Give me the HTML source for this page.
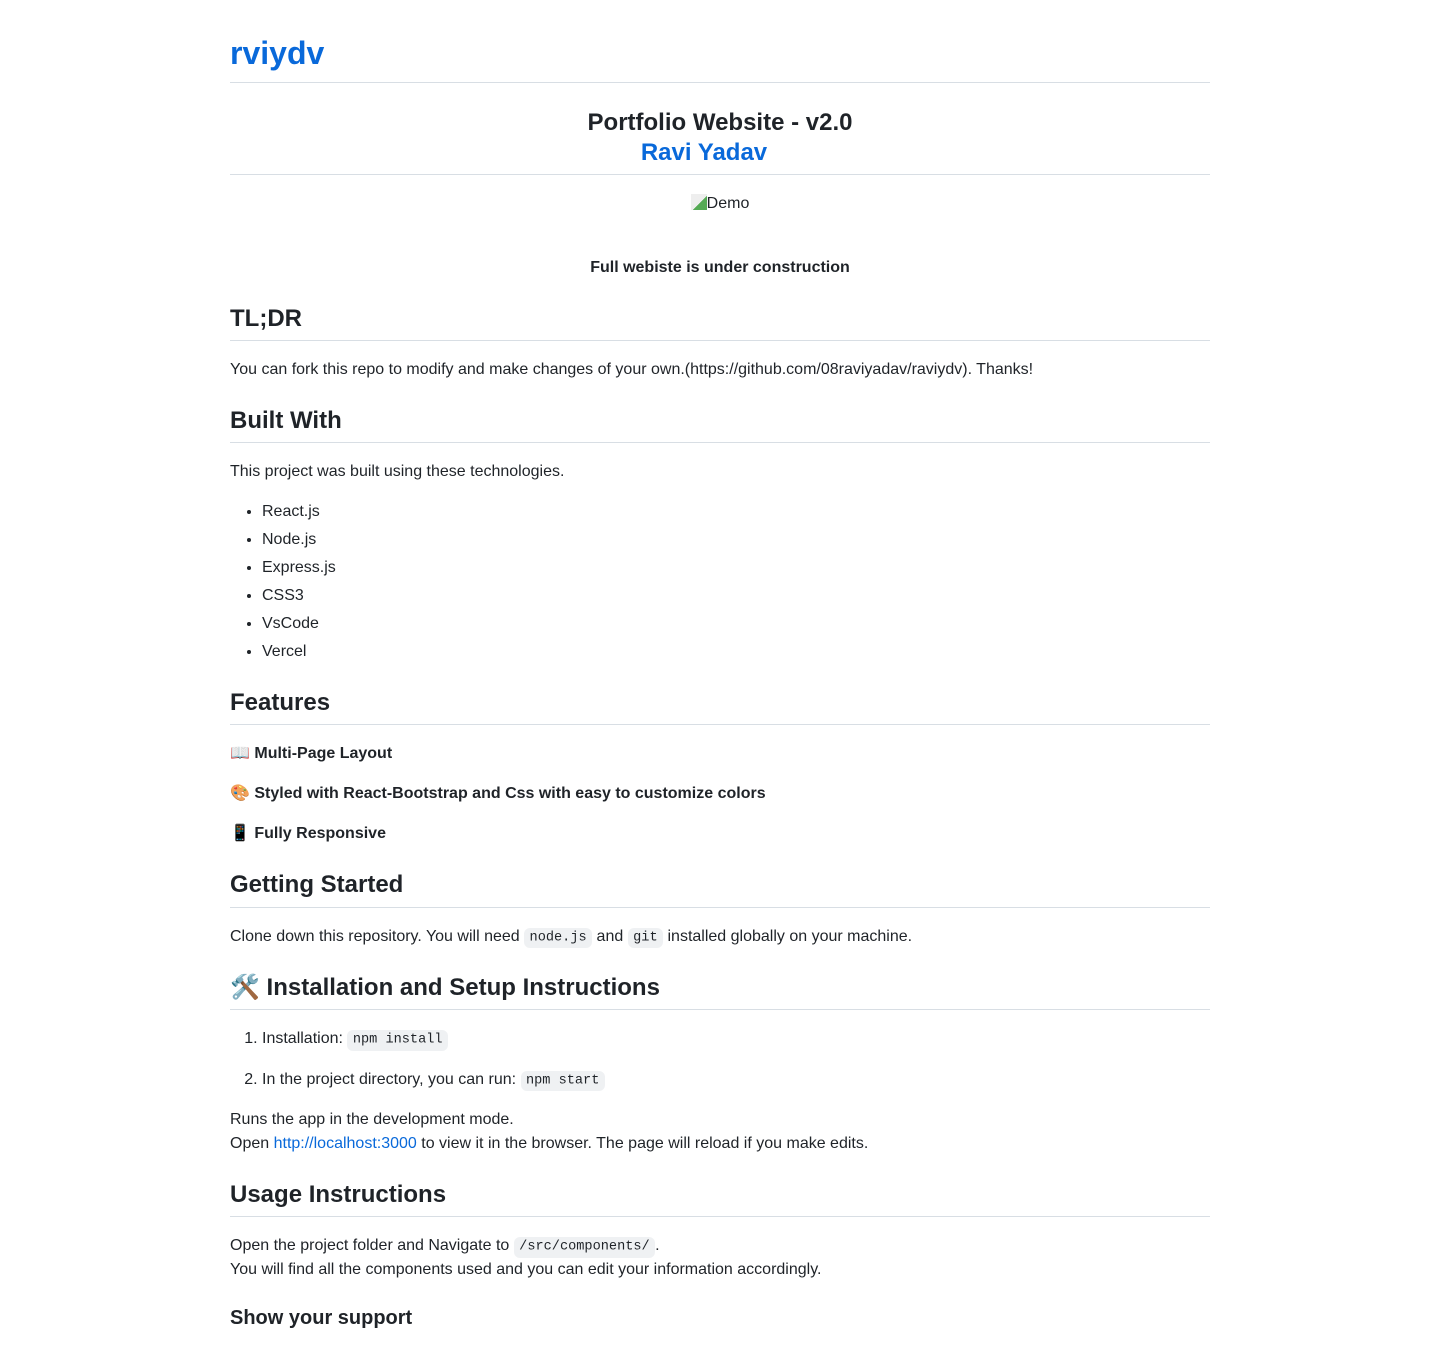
<!DOCTYPE html>
<html><head><meta charset="utf-8"><style>
body{margin:0;background:#fff;color:#1f2328;font-family:"Liberation Sans","Noto Sans CJK SC",sans-serif;font-size:16px;line-height:1.5}
.c{width:980px;margin:0 auto;padding-top:33px}
h1,h2,h3{font-weight:600;line-height:1.25;margin:24px 0 16px}
h1{font-size:32px;padding-bottom:8.6px;border-bottom:1px solid #d8dee4;margin-top:0}
h2{font-size:24px;padding-bottom:6.2px;border-bottom:1px solid #d8dee4;margin-bottom:17px}
h3{font-size:20px}
p,ul,ol{margin:0 0 16px}
ul,ol{padding-left:32px}
li+li{margin-top:4px}
a{color:#0969da;text-decoration:none}
code{font-family:"Liberation Mono",monospace;font-size:85%;background:rgba(175,184,193,.2);padding:.2em .4em;border-radius:6px}
.ctr{text-align:center}
ol li p{margin:16px 0 0}
ol li:first-child p{margin-top:0}
</style></head><body><div class="c">
<h1 style="margin-bottom:25px"><a href="#">rviydv</a></h1>
<h2 class="ctr" style="margin-top:0">Portfolio Website - v2.0<br><a href="#">Ravi Yadav</a><span style="display:inline-block;width:32px"></span></h2>
<p class="ctr"><span style="display:inline-block;width:16px;height:16px;vertical-align:-2px;background:linear-gradient(135deg,#eee 55%,#5a5 55%);"></span>Demo</p>
<p class="ctr" style="margin-top:40px"><strong>Full webiste is under construction</strong></p>
<h2>TL;DR</h2>
<p>You can fork this repo to modify and make changes of your own.(https://github.com/08raviyadav/raviydv). Thanks!</p>
<h2>Built With</h2>
<p>This project was built using these technologies.</p>
<ul><li>React.js</li><li>Node.js</li><li>Express.js</li><li>CSS3</li><li>VsCode</li><li>Vercel</li></ul>
<h2>Features</h2>
<p><strong>📖 Multi-Page Layout</strong></p>
<p><strong>🎨 Styled with React-Bootstrap and Css with easy to customize colors</strong></p>
<p><strong>📱 Fully Responsive</strong></p>
<h2>Getting Started</h2>
<p>Clone down this repository. You will need <code>node.js</code> and <code>git</code> installed globally on your machine.</p>
<h2>🛠️ Installation and Setup Instructions</h2>
<ol><li><p>Installation: <code>npm install</code></p></li><li><p>In the project directory, you can run: <code>npm start</code></p></li></ol>
<p>Runs the app in the development mode.<br>Open <a href="#">http://localhost:3000</a> to view it in the browser. The page will reload if you make edits.</p>
<h2>Usage Instructions</h2>
<p>Open the project folder and Navigate to <code>/src/components/</code>.<br>You will find all the components used and you can edit your information accordingly.</p>
<h3>Show your support</h3>
</div></body></html>
